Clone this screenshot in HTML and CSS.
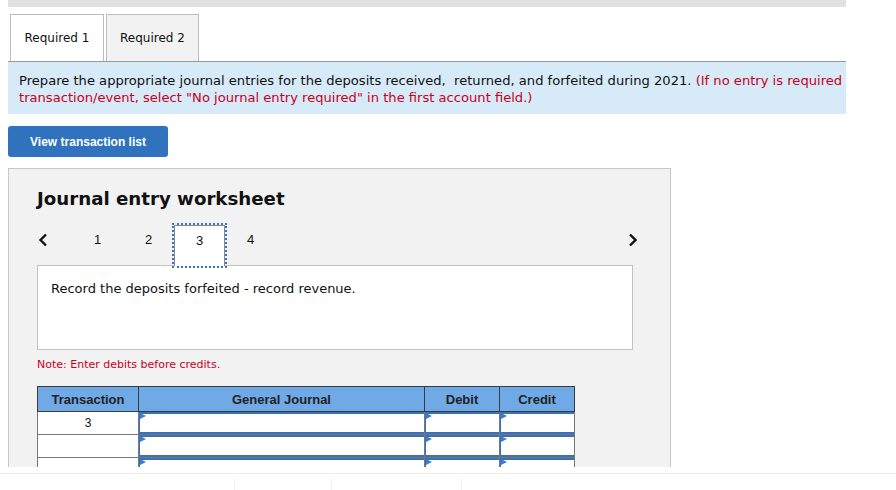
FILE: index.html
```html
<!DOCTYPE html>
<html lang="en">
<head>
  <meta charset="UTF-8">
  <meta name="viewport" content="width=device-width, initial-scale=1.0">
  <title>Journal entry worksheet</title>
  <link rel="stylesheet" href="styles.css">
</head>
<body>
  <div class="screen">
    <div class="topbar"></div>

    <div class="tabs">
      <div class="tab active">Required 1</div>
      <div class="tab">Required 2</div>
    </div>

    <div class="instructions">
      <p>Prepare the appropriate journal entries for the deposits received,&nbsp; returned, and forfeited during 2021. <span class="red">(If no entry is required</span><br><span class="red">transaction/event, select "No journal entry required" in the first account field.)</span></p>
    </div>

    <button class="view-btn">View transaction list</button>

    <div class="worksheet">
      <h2>Journal entry worksheet</h2>

      <div class="steps">
        <div class="arrow prev">
          <svg width="10" height="14" viewBox="0 0 10 14"><path d="M8 1.5 2.5 7 8 12.5" fill="none" stroke="#111" stroke-width="2.4"/></svg>
        </div>
        <div class="step">1</div>
        <div class="step">2</div>
        <div class="step current">3</div>
        <div class="step">4</div>
        <div class="arrow next">
          <svg width="10" height="14" viewBox="0 0 10 14"><path d="M2 1.5 7.5 7 2 12.5" fill="none" stroke="#111" stroke-width="2.4"/></svg>
        </div>
      </div>

      <div class="description">Record the deposits forfeited - record revenue.</div>

      <div class="note">Note: Enter debits before credits.</div>

      <table class="journal">
        <thead>
          <tr>
            <th class="col-tx">Transaction</th>
            <th class="col-acct">General Journal</th>
            <th class="col-amt">Debit</th>
            <th class="col-amt">Credit</th>
          </tr>
        </thead>
        <tbody>
          <tr>
            <td class="tx">3</td>
            <td class="entry"></td>
            <td class="entry"></td>
            <td class="entry"></td>
          </tr>
          <tr>
            <td class="tx"></td>
            <td class="entry"></td>
            <td class="entry"></td>
            <td class="entry"></td>
          </tr>
          <tr>
            <td class="tx"></td>
            <td class="entry"></td>
            <td class="entry"></td>
            <td class="entry"></td>
          </tr>
        </tbody>
      </table>
    </div>
  </div>

  <div class="footer">
    <div class="footer-cell wide"></div>
    <div class="footer-cell mid"></div>
    <div class="footer-cell last"></div>
  </div>
</body>
</html>
```

FILE: styles.css
```css
body {
  margin: 0;
  background: #fff;
  font-family: 'DejaVu Sans', Verdana, sans-serif;
  color: #111;
}
.screen {
  height: 467px;
  overflow: hidden;
  padding: 0 8px;
}
.topbar {
  width: 838px;
  height: 7px;
  background: #e1e1e1;
}
.tabs {
  display: flex;
  gap: 2px;
  margin-top: 7px;
  padding-left: 2px;
}
.tab {
  width: 91px;
  height: 46px;
  border: 1px solid #bdbdbd;
  border-bottom: none;
  background: #f2f2f2;
  font-size: 12px;
  line-height: 47px;
  text-align: center;
}
.tab.active {
  background: #fff;
  width: 92px;
}
.instructions {
  width: 838px;
  overflow: hidden;
  background: #d7eaf8;
  border-top: 1px solid #999;
  padding: 10px 0 8px 0;
}
.instructions p {
  margin: 0 0 0 11px;
  font-size: 13.1px;
  line-height: 17px;
  white-space: nowrap;
}
.red {
  color: #c8001c;
}
.view-btn {
  display: block;
  margin-top: 12px;
  width: 160px;
  height: 31px;
  border: none;
  border-radius: 3px;
  background: #3072be;
  color: #fff;
  font-family: 'Liberation Sans', Arial, sans-serif;
  font-size: 12px;
  font-weight: bold;
  cursor: pointer;
}
.worksheet {
  margin-top: 11px;
  width: 633px;
  min-height: 320px;
  background: #f2f2f2;
  border: 1px solid #c8c8c8;
  padding: 18px 0 0 28px;
}
.worksheet h2 {
  margin: 0;
  font-size: 18.2px;
  line-height: 24px;
  font-weight: bold;
}
.steps {
  display: flex;
  align-items: flex-start;
  width: 595px;
  height: 41px;
  margin-top: 14px;
  font-family: 'Liberation Sans', Arial, sans-serif;
  font-size: 13px;
}
.arrow {
  height: 30px;
  display: flex;
  align-items: center;
}
.arrow.prev {
  width: 35px;
  padding-left: 1px;
  box-sizing: border-box;
}
.arrow.next {
  margin-left: auto;
  margin-right: -6px;
}
.step {
  width: 51px;
  height: 41px;
  line-height: 30px;
  text-align: center;
  box-sizing: border-box;
}
.step.current {
  background: #fff;
  border: 1px solid #8a8a8a;
  border-bottom: none;
  outline: 2px dotted #3573c4;
  position: relative;
  z-index: 1;
}
.description {
  width: 581px;
  height: 69px;
  margin-top: -1px;
  background: #fff;
  border: 1px solid #c2c2c2;
  padding: 14px 0 0 13px;
  font-size: 13px;
  line-height: 17px;
}
.note {
  margin-top: 7px;
  color: #c8001c;
  font-size: 11px;
  line-height: 15px;
}
.journal {
  margin-top: 14px;
  border-collapse: collapse;
  font-family: 'Liberation Sans', Arial, sans-serif;
  font-size: 13px;
}
.journal th {
  height: 24px;
  padding: 0;
  background: #6fa9e6;
  border: 1px solid #3b3b3b;
  color: #222;
  font-weight: bold;
}
.col-tx { width: 100px; }
.col-acct { width: 285px; }
.col-amt { width: 74px; }
.journal td {
  height: 22px;
  padding: 0;
  background: #fff;
  border: 1px solid #777;
}
.journal td.tx {
  text-align: center;
  font-size: 12px;
}
.journal td.entry {
  position: relative;
  box-shadow: inset 1px 2px 0 #3a70b8, inset 0 -2px 0 #3a70b8;
}
.journal td.entry::before {
  content: '';
  position: absolute;
  top: 1px;
  left: 1px;
  border-left: 6px solid #3b7bd0;
  border-top: 3.5px solid transparent;
  border-bottom: 3.5px solid transparent;
}
.footer {
  height: 17px;
  margin-top: 6px;
  border-top: 1px solid #ececec;
  display: flex;
  padding-top: 5px;
}
.footer-cell {
  border-right: 1px solid #f0f0f0;
}
.footer-cell.wide { width: 234px; }
.footer-cell.mid { width: 96px; }
.footer-cell.last { width: 129px; }
```
